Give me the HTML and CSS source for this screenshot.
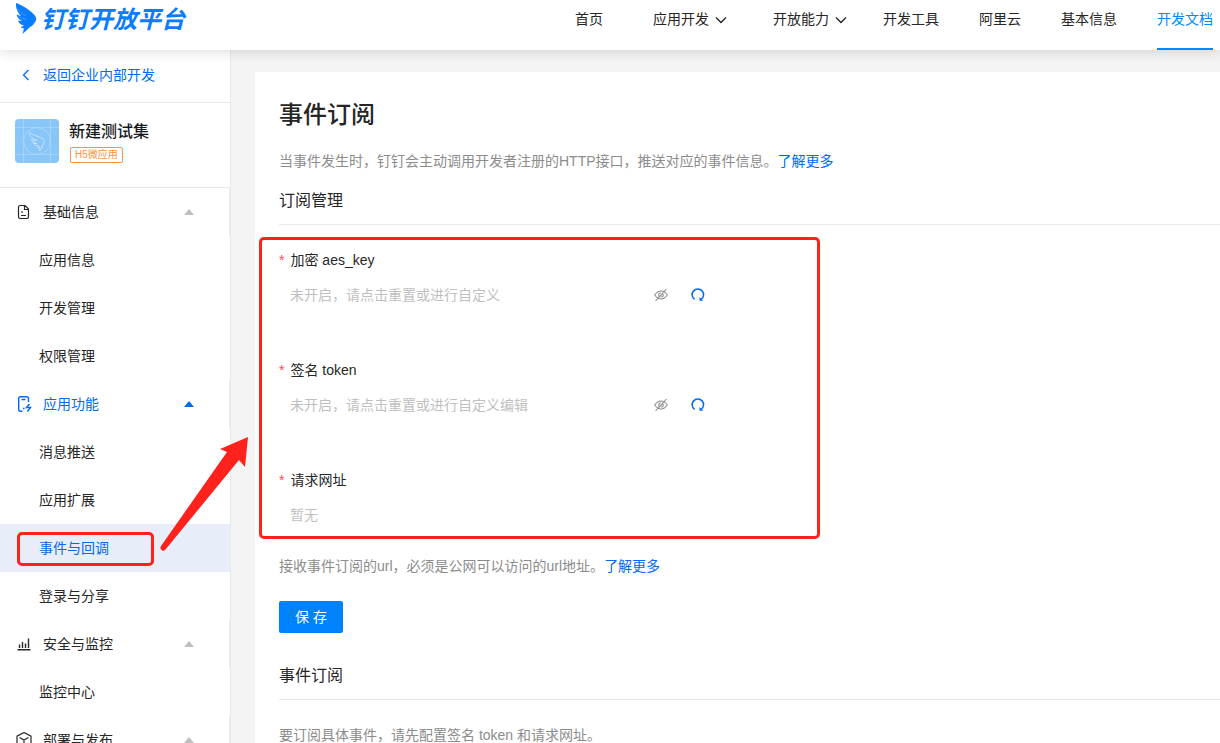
FILE: index.html
```html
<!DOCTYPE html>
<html lang="zh-CN">
<head>
<meta charset="utf-8">
<title>钉钉开放平台 - 事件订阅</title>
<link rel="stylesheet" href="styles.css">
</head>
<body>
<header class="header">
  <a class="logo" href="#">
    <svg class="logo-mark" viewBox="0 0 22 32" aria-hidden="true">
      <path d="M1 0C7 2 14 6.500 18 10.500Q22 14 21 17.500Q19 22 14.500 24.500L7.500 31L9 25.500L5.500 24.500L9 22.500C6 22 3.500 20 3 17.500L7 18.200C4 16.500 2 14 1.500 11.500L6 13C3 10 .5 5 1 0Z" fill="#0a7cff"/>
      <path d="M1.500 5C4 9 7 11 11 12.500M3 12C5 14.500 8 16 11 16.500" stroke="#5aabff" stroke-width=".7" fill="none"/>
    </svg>
    <span class="logo-text">钉钉开放平台</span>
  </a>
  <nav class="nav">
    <a class="nav-item" href="#">首页</a>
    <a class="nav-item nav-more" href="#">应用开发<svg class="chevron" viewBox="0 0 12 12" aria-hidden="true"><path d="M1 3.500L6 8.500L11 3.500"/></svg></a>
    <a class="nav-item nav-more" href="#">开放能力<svg class="chevron" viewBox="0 0 12 12" aria-hidden="true"><path d="M1 3.500L6 8.500L11 3.500"/></svg></a>
    <a class="nav-item" href="#">开发工具</a>
    <a class="nav-item" href="#">阿里云</a>
    <a class="nav-item" href="#">基本信息</a>
    <a class="nav-item active" href="#">开发文档</a>
  </nav>
</header>

<div class="layout">
  <aside class="sidebar">
    <a class="back" href="#">
      <svg class="back-icon" viewBox="0 0 8 12" aria-hidden="true"><path d="M6.500 1L1.500 6L6.500 11"/></svg>
      返回企业内部开发
    </a>
    <div class="app">
      <svg class="app-icon" viewBox="0 0 44 44" aria-hidden="true">
        <rect width="44" height="44" rx="4" fill="#88c5f8"/>
        <g fill="none" stroke="#b4dafa" stroke-width=".8">
          <path d="M8.500 0V44M35.500 0V44M0 8.500H44M0 35.500H44" opacity=".75"/>
          <circle cx="22" cy="22" r="13.500"/>
          <path stroke="#d3e9fc" d="M14.500 13.500C18 16 24 17.500 28 20C30 21.500 29 24 28 26L26.500 28H28L24.500 32L25 28.500H22.500L23.500 26.500C21 27 19 26 18.500 24.500L22 24.500C18.500 23.500 16.500 22.500 16.500 20.500L22 21.500C17 19.500 14 17.500 14.500 13.500Z"/>
        </g>
      </svg>
      <div class="app-info">
        <strong class="app-name">新建测试集</strong>
        <span class="tag">H5微应用</span>
      </div>
    </div>
    <nav class="menu">
      <button class="group" type="button">
        <svg class="group-icon" viewBox="0 0 16 16" aria-hidden="true"><path d="M2.500 3.500Q2.500 1.500 4 1.500H9L12.500 5V12.500Q12.500 14.500 11 14.500H4Q2.500 14.500 2.500 12.500ZM8.500 1.500V5.500H12.500M5 8H7M5 11.500H10"/></svg>
        <span>基础信息</span><i class="caret"></i>
      </button>
      <a class="item" href="#">应用信息</a>
      <a class="item" href="#">开发管理</a>
      <a class="item" href="#">权限管理</a>
      <button class="group open" type="button">
        <svg class="group-icon" viewBox="0 0 16 16" aria-hidden="true"><path stroke-width="1.400" d="M12.500 6V2.500Q12.500.7 10.700.7H4.500Q2.700.7 2.700 2.500V13.500Q2.700 15.300 4.500 15.300H6.500M5.500 3.500H9.500M7 12.500H8.500M13.500 8L10.500 11.500H14.500L11.500 15.500"/></svg>
        <span>应用功能</span><i class="caret"></i>
      </button>
      <a class="item" href="#">消息推送</a>
      <a class="item" href="#">应用扩展</a>
      <a class="item selected" href="#">事件与回调</a>
      <a class="item" href="#">登录与分享</a>
      <button class="group" type="button">
        <svg class="group-icon" viewBox="0 0 16 16" aria-hidden="true"><path stroke-width="1.400" d="M1.500 13.700H14.500M3.500 8.500V12M6.500 6V12M9.500 7.500V12M12.500 2.500V12"/></svg>
        <span>安全与监控</span><i class="caret"></i>
      </button>
      <a class="item" href="#">监控中心</a>
      <button class="group" type="button">
        <svg class="group-icon" viewBox="0 0 16 16" aria-hidden="true"><path d="M8 .5L15 4.200V11.800L8 15.500L1 11.800V4.200ZM3.500 5.500L8 8L12.500 5.500M8 8V13"/></svg>
        <span>部署与发布</span><i class="caret"></i>
      </button>
    </nav>
    <svg class="arrow" viewBox="0 0 90 116" aria-hidden="true"><path d="M88 0L85 30L79 23L5.500 112.500C3 115.500-1 112 1 109L67 15L60 12Z" fill="#ff221c"/></svg>
  </aside>

  <main class="content">
    <section class="card">
      <h1>事件订阅</h1>
      <p class="desc">当事件发生时，钉钉会主动调用开发者注册的HTTP接口，推送对应的事件信息。<a href="#">了解更多</a></p>
      <h2>订阅管理</h2>
      <form>
        <div class="fields">
          <div class="field">
            <label for="aes">加密 aes_key</label>
            <div class="control">
              <input id="aes" type="text" placeholder="未开启，请点击重置或进行自定义">
              <button class="icon-button" type="button" aria-label="显示"><svg viewBox="0 0 14 14"><path d="M.7 7Q3.500 3 7 3T13.300 7Q10.500 11 7 11T.7 7ZM12.500 1L1.500 13M5 8.500Q4 5 7 4.800M9 6Q10 9 7 9.300M8.700 5.500L5.500 9"/></svg></button>
              <button class="icon-button reset" type="button" aria-label="重置"><svg viewBox="0 0 14 14"><path d="M3.500 11.300A5.700 5.700 0 1 1 10.200 11.300"/><path d="M8.500 9V12.800H12Z" class="solid"/></svg></button>
            </div>
          </div>
          <div class="field">
            <label for="token">签名 token</label>
            <div class="control">
              <input id="token" type="text" placeholder="未开启，请点击重置或进行自定义编辑">
              <button class="icon-button" type="button" aria-label="显示"><svg viewBox="0 0 14 14"><path d="M.7 7Q3.500 3 7 3T13.300 7Q10.500 11 7 11T.7 7ZM12.500 1L1.500 13M5 8.500Q4 5 7 4.800M9 6Q10 9 7 9.300M8.700 5.500L5.500 9"/></svg></button>
              <button class="icon-button reset" type="button" aria-label="重置"><svg viewBox="0 0 14 14"><path d="M3.500 11.300A5.700 5.700 0 1 1 10.200 11.300"/><path d="M8.500 9V12.800H12Z" class="solid"/></svg></button>
            </div>
          </div>
          <div class="field">
            <label for="url">请求网址</label>
            <div class="control">
              <input id="url" type="text" placeholder="暂无">
            </div>
          </div>
        </div>
        <p class="desc">接收事件订阅的url，必须是公网可以访问的url地址。<a href="#">了解更多</a></p>
        <button class="save" type="button">保 存</button>
      </form>
      <h2>事件订阅</h2>
      <p class="desc">要订阅具体事件，请先配置签名 token 和请求网址。</p>
    </section>
  </main>
</div>
</body>
</html>
```
FILE: styles.css
```css
* {
  box-sizing: border-box;
}

body {
  margin: 0;
  height: 100vh;
  overflow: hidden;
  display: flex;
  flex-direction: column;
  background: #f4f4f4;
  color: #262626;
  font: 14px/22px "Liberation Sans", "Noto Sans CJK SC", sans-serif;
}

a {
  color: #006af5;
  text-decoration: none;
}

button,
input {
  font: inherit;
  border: 0;
  background: none;
}

svg {
  display: block;
  flex: none;
}

h1,
h2,
p {
  margin: 0;
}

/* Header */
.header {
  position: relative;
  z-index: 2;
  flex: none;
  height: 50px;
  padding: 0 7px 0 15px;
  display: flex;
  justify-content: space-between;
  background: #fff;
  box-shadow: 0 2px 12px rgba(0, 20, 10, 0.14);
}

.logo {
  display: flex;
  align-items: flex-start;
  gap: 4px;
  color: #0a7cff;
}

.logo-mark {
  width: 22px;
  height: 32px;
  margin-top: 3px;
}

.logo-text {
  font-size: 24px;
  line-height: 40px;
  font-weight: 700;
  font-style: italic;
}

.nav {
  display: flex;
  gap: 40px;
}

.nav-item {
  height: 50px;
  line-height: 38px;
  color: #262626;
  white-space: nowrap;
}

.nav-item.active {
  color: #0089ff;
  border-bottom: 2px solid #0089ff;
}

.nav-more {
  display: flex;
  gap: 6px;
  padding-left: 10px;
  margin-right: -4px;
}

.chevron {
  width: 12px;
  height: 12px;
  margin-top: 14px;
  fill: none;
  stroke: #262626;
  stroke-width: 1.4;
}

/* Sidebar */
.layout {
  flex: 1;
  min-height: 0;
  display: flex;
}

.sidebar {
  position: relative;
  flex: none;
  width: 231px;
  background: #fff;
  border-right: 1px solid #e9e9e9;
}

.back {
  display: flex;
  align-items: center;
  gap: 13px;
  height: 53px;
  padding: 0 22px 2px;
  border-bottom: 1px solid #e9e9e9;
}

.back-icon {
  width: 8px;
  height: 12px;
  fill: none;
  stroke: #006af5;
  stroke-width: 1.3;
}

.app {
  display: flex;
  gap: 10px;
  padding: 16px 15px 24px;
  border-bottom: 1px solid #e9e9e9;
}

.app-icon {
  width: 44px;
  height: 44px;
}

.app-info {
  display: flex;
  flex-direction: column;
  align-items: flex-start;
  gap: 2px;
}

.app-name {
  font-size: 16px;
  line-height: 26px;
  font-weight: 500;
  color: #171a1d;
}

.tag {
  margin-left: 1px;
  padding: 0 4px;
  border: 1px solid #ff943e;
  border-radius: 2px;
  color: #ff943e;
  font-size: 10px;
  line-height: 14px;
}

.group,
.item {
  display: flex;
  align-items: center;
  width: 100%;
  height: 48px;
  color: #262626;
}

.group {
  gap: 11px;
  padding: 0 35px 0 16px;
  border-right: 1px solid #e9e9e9;
  text-align: left;
}

.group span {
  flex: 1;
}

.group.open {
  color: #006af5;
}

.group-icon {
  width: 16px;
  height: 16px;
  fill: none;
  stroke: currentColor;
  stroke-width: 1.2;
}

.caret {
  border: 5px solid transparent;
  border-top: 0;
  border-bottom: 6px solid #bfbfbf;
}

.open .caret {
  border-bottom-color: #006af5;
}

.item {
  padding-left: 39px;
}

.item.selected {
  position: relative;
  background: #e7eef9;
  color: #006af5;
}

.item.selected::after {
  content: "";
  position: absolute;
  inset: 8px 76px 6px 17px;
  border: 3px solid #ff221c;
  border-radius: 5px;
}

.arrow {
  position: absolute;
  z-index: 1;
  left: 160px;
  top: 387px;
  width: 90px;
  height: 116px;
}

/* Content */
.content {
  flex: 1;
  min-width: 0;
  padding: 22px 0 0 24px;
}

.card {
  min-height: 100%;
  padding: 27px 0 24px 24px;
  background: #fff;
}

h1 {
  margin-bottom: 19px;
  font-size: 24px;
  line-height: 32px;
  font-weight: 500;
}

h2 {
  margin: 16px 0 24px;
  padding-bottom: 10px;
  border-bottom: 1px solid #e9e9e9;
  font-size: 16px;
  line-height: 26px;
  font-weight: 400;
}

.desc {
  color: #8c8c8c;
}

.fields {
  position: relative;
  max-width: 528px;
}

.fields::after {
  content: "";
  position: absolute;
  inset: -12px -13px 16px -20px;
  border: 3px solid #ff221c;
  border-radius: 5px;
  pointer-events: none;
}

.field {
  display: flex;
  flex-direction: column;
  gap: 8px;
  padding-bottom: 48px;
}

.field:last-child {
  padding-bottom: 24px;
}

.field label::before {
  content: "*";
  margin-right: 6px;
  color: #ff4d4f;
}

.control {
  display: flex;
  align-items: center;
  height: 32px;
}

.control input {
  width: 363px;
  height: 32px;
  padding: 0 11px;
  color: #262626;
  outline: 0;
}

.control input::placeholder {
  color: #bfbfbf;
  opacity: 1;
}

.icon-button {
  padding: 0;
  margin-left: 12px;
  margin-right: 11px;
}

.icon-button svg {
  width: 14px;
  height: 14px;
  fill: none;
  stroke: #8c8c8c;
  stroke-width: 1.1;
}

.icon-button.reset svg {
  stroke: #006af5;
  stroke-width: 1.5;
}

.icon-button .solid {
  fill: #006af5;
  stroke: none;
}

.save {
  display: block;
  height: 32px;
  margin: 24px 0 30px;
  padding: 0 16px;
  border-radius: 2px;
  background: #0082ff;
  color: #fff;
}
```
